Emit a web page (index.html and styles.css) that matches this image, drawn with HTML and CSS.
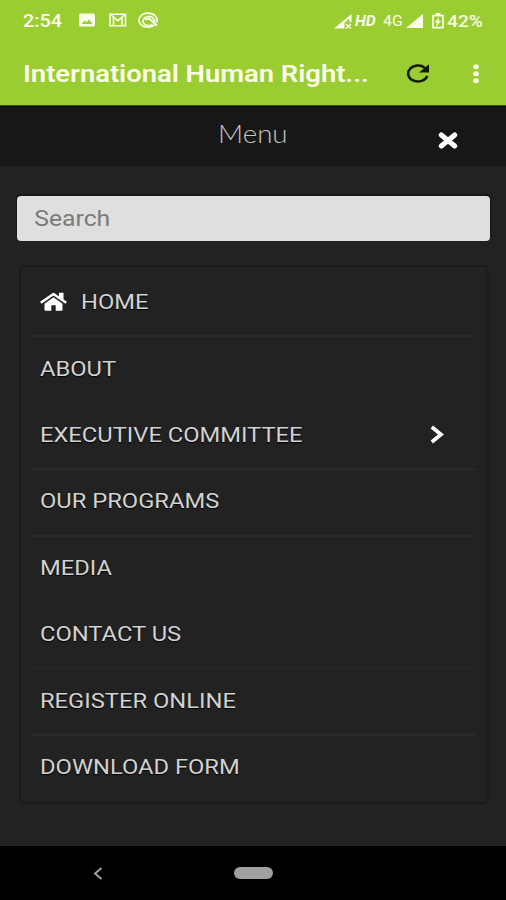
FILE: index.html
```html
<!DOCTYPE html>
<html lang="en">
<head>
  <meta charset="utf-8">
  <meta name="viewport" content="width=device-width, initial-scale=1">
  <title>International Human Rights</title>
  <link rel="stylesheet" href="styles.css">
</head>
<body>

  <header class="top">
    <div class="status-bar">
      <span class="time wide">2:54</span>
      <svg class="notifications" width="82" height="18" viewBox="0 0 82 18">
        <path fill="#fbfde8" fill-rule="evenodd" d="M2.500 2.500h13a1.500 1.500 0 0 1 1.500 1.500v10a1.500 1.500 0 0 1-1.500 1.500h-13a1.500 1.500 0 0 1-1.500-1.500v-10a1.500 1.500 0 0 1 1.500-1.500zM3.500 13h11l-3.500-4.500-2.500 3-2-2z"/>
        <path fill="none" stroke="#fbfde8" stroke-width="1.600" d="M32 3.300h15.500v11.500h-15.500zM35.500 14.500v-8.500l4.300 4 4.200-4v8.500M32.300 3.500l7.500 6 7.500-6"/>
        <path fill="none" stroke="#fbfde8" stroke-width="1.700" d="M76.500 14a9 7 0 1 1 2-2.500M74.500 13.500a5.700 4.600 0 1 1 1.800-2.500"/>
        <path fill="none" stroke="#fbfde8" stroke-width="2.200" d="M67 8.500l4-1 8 7"/>
      </svg>
      <div class="signals">
        <svg width="19" height="15" viewBox="0 0 19 15">
          <path fill="#fbfde8" fill-rule="evenodd" d="M0 14.500L17.500 0v8h-2.200v-3.500l-4.800 4.500v5.500z"/>
          <path stroke="#fbfde8" stroke-width="1.400" d="M12 10l5 4.500M17 10l-5 4.500"/>
        </svg>
        <span class="hd wide">HD</span>
        <span class="net wide">4G</span>
        <svg width="17" height="14" viewBox="0 0 17 14"><path fill="#fbfde8" d="M0 14L17 0v14z"/></svg>
        <svg class="battery" width="12" height="16" viewBox="0 0 12 16">
          <path fill="none" stroke="#fbfde8" stroke-width="1.700" d="M1 2.700h10v12h-10z"/>
          <path fill="#fbfde8" d="M3.500 0h5v2h-5zM7 4l-4.500 5.500h2.500l-1 4.500 5-6h-2.500z"/>
        </svg>
        <span class="percent wide">42%</span>
      </div>
    </div>
    <div class="app-bar">
      <h1 class="app-title"><span class="wide">International Human Right...</span></h1>
      <svg class="refresh" width="24" height="21" viewBox="0 0 24 21">
        <path fill="none" stroke="#101a04" stroke-width="2.500" d="M21.300 13A9.800 8 0 1 1 18.700 4.700"/>
        <path fill="#101a04" d="M23 1.300v8.200h-10z"/>
      </svg>
      <svg class="more" width="6" height="20" viewBox="0 0 6 20">
        <g fill="#fbfde8">
          <ellipse cx="3" cy="2.700" rx="2.900" ry="2.500"/>
          <ellipse cx="3" cy="9.700" rx="2.900" ry="2.500"/>
          <ellipse cx="3" cy="16.700" rx="2.900" ry="2.500"/>
        </g>
      </svg>
    </div>
  </header>

  <div class="menu-header">
    <h2 class="menu-title wide">Menu</h2>
    <svg class="close" width="20" height="17" viewBox="0 0 20 17">
      <path stroke="#fff" stroke-width="5" stroke-linecap="round" d="M3.300 3l13.400 11M16.700 3l-13.400 11"/>
    </svg>
  </div>

  <main class="menu">
    <div class="search">
      <input class="search-input" type="text" placeholder="Search">
    </div>
    <ul class="menu-list">
      <li class="item">
        <svg class="home" width="28" height="19" viewBox="0 0 28 19">
          <path fill="#fff" d="M13.500 5.200l9 6.600v6a1 1 0 0 1-1 1h-5.800v-5.500h-4.400v5.500h-5.800a1 1 0 0 1-1-1v-6z"/>
          <path fill="none" stroke="#fff" stroke-width="2.600" stroke-linejoin="round" d="M.8 10.800l12.700-8.800 12.700 8.800"/>
          <path fill="#fff" d="M19 .8h4.500v7l-4.500-3z"/>
        </svg>
        <span class="wide">HOME</span>
      </li>
      <li class="item no-line"><span class="wide">ABOUT</span></li>
      <li class="item">
        <span class="wide">EXECUTIVE COMMITTEE</span>
        <svg class="arrow" width="15" height="19" viewBox="0 0 15 19">
          <path fill="none" stroke="#fff" stroke-width="3.700" d="M1.800 2l9.200 7.500-9.200 7.500"/>
        </svg>
      </li>
      <li class="item"><span class="wide">OUR PROGRAMS</span></li>
      <li class="item faint"><span class="wide">MEDIA</span></li>
      <li class="item faint"><span class="wide">CONTACT US</span></li>
      <li class="item"><span class="wide">REGISTER ONLINE</span></li>
      <li class="item no-line"><span class="wide">DOWNLOAD FORM</span></li>
    </ul>
  </main>

  <footer class="nav-bar">
    <svg class="back" width="10" height="13" viewBox="0 0 10 13">
      <path fill="none" stroke="#a0a0a0" stroke-width="2" d="M8.500 1l-6.500 5.500 6.500 5.500"/>
    </svg>
    <div class="pill"></div>
  </footer>

</body>
</html>
```
FILE: styles.css
```css
* {
  box-sizing: border-box;
}
body {
  margin: 0;
  height: 900px;
  display: flex;
  flex-direction: column;
  background: #222;
  color: #d2d2d2;
  font-family: Roboto, "Liberation Sans", sans-serif;
  overflow: hidden;
}
svg {
  display: block;
  flex: none;
}
/* slightly extended lettering */
.wide {
  display: inline-block;
  white-space: nowrap;
  transform: scaleX(1.13);
  transform-origin: left center;
}

/* top bars */
.top {
  height: 106px;
  background: #9acd32;
  color: #fbfde8;
  border-bottom: 1px solid #3f5512;
}
.status-bar {
  height: 42px;
  display: flex;
  align-items: center;
  padding: 0 22px 0 23px;
}
.time {
  width: 55px;
  font-size: 17.500px;
  font-weight: 500;
}
.notifications {
  margin-top: -2px;
}
.signals {
  margin-left: auto;
  width: 150px;
  display: flex;
  align-items: center;
}
.hd {
  width: 28px;
  margin-left: 2px;
  font-size: 14px;
  font-weight: 700;
  font-style: italic;
}
.net {
  width: 23px;
  font-size: 14px;
}
.battery {
  margin-left: 9px;
}
.percent {
  margin-left: 3px;
  font-size: 17px;
  font-weight: 500;
}
.app-bar {
  height: 63px;
  display: flex;
  align-items: center;
  padding: 0 27px 0 23px;
}
.app-title {
  flex: 1;
  margin: 2px 0 0;
  font-size: 23px;
  font-weight: 600;
}
.app-title .wide {
  transform: scaleX(1.19);
}
.refresh {
  margin-right: 43px;
}

/* menu heading */
.menu-header {
  height: 60px;
  display: grid;
  grid-template-columns: 1fr auto 1fr;
  background: #171717;
  border-top: 1px solid #050505;
}
.menu-title {
  grid-column: 2;
  margin: 12px 0 0;
  font-family: Lato, sans-serif;
  font-size: 24.500px;
  line-height: 30px;
  font-weight: 300;
  color: #c4c4c4;
  transform-origin: center;
}
.close {
  justify-self: end;
  margin: 25px 48px 0 0;
}

/* search and items */
.menu {
  flex: 1;
  padding: 30px 16px 0 17px;
}
.search {
  height: 45px;
  background: #dfdfdf;
  border-radius: 4px;
  box-shadow: 0 -1px 1px 1px #161616;
}
.search-input {
  width: 86.900%;
  height: 45px;
  padding: 0 15px;
  border: 0;
  background: transparent;
  font-family: inherit;
  font-size: 21.500px;
  transform: scaleX(1.15);
  transform-origin: left center;
}
.search-input::placeholder {
  color: #7a7a7a;
}
.menu-list {
  list-style: none;
  height: 539px;
  margin: 24px 1px 0 2px;
  padding: 4px 11px;
  border: 2px solid #1b1b1b;
  border-radius: 5px;
}
.item {
  height: 66.400px;
  display: flex;
  align-items: center;
  padding: 0 31px 2px 8px;
  border-bottom: 2px solid #292929;
  font-size: 21px;
  text-shadow: 0 1px 1px #000;
}
.item.faint {
  border-color: #252525;
}
.item.no-line {
  border-color: transparent;
}
.home {
  margin: -2px 13px 0 0;
}
.arrow {
  margin-left: auto;
}

/* system navigation */
.nav-bar {
  height: 54px;
  display: grid;
  grid-template-columns: 93px 141px auto;
  align-items: center;
  justify-content: start;
  background: #000;
}
.back {
  grid-column: 2;
}
.pill {
  width: 39px;
  height: 12px;
  border-radius: 6px;
  background: #a0a0a0;
}
```
